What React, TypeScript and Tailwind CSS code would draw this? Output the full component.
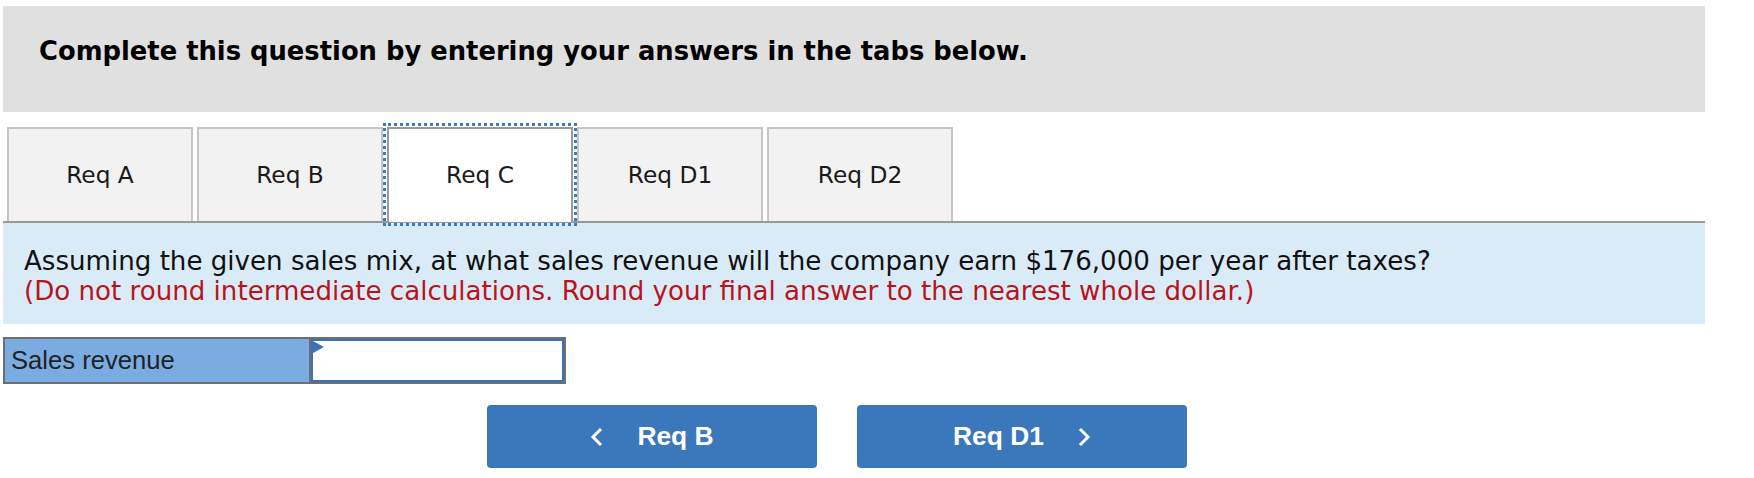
const tabs = ["Req A", "Req B", "Req C", "Req D1", "Req D2"];

function Chevron({ dir }: { dir: "left" | "right" }) {
  return (
    <svg width="14" height="20" viewBox="0 0 14 20" className="shrink-0">
      <polyline
        points={dir === "left" ? "11,2 3,10 11,18" : "3,2 11,10 3,18"}
        fill="none"
        stroke="white"
        strokeWidth="3"
      />
    </svg>
  );
}

export default function App() {
  return (
    <main className="min-h-screen bg-white pt-[6px] pl-[3px]">
      <div className="w-[1702px]">
        {/* HEADER */}
        <div className="h-[106px] bg-[#e0e0e0] pt-[30px] pl-[36px]">
          <h1 className="font-['DejaVu_Sans',sans-serif] text-[25.8px] font-bold leading-[30px] text-black">
            Complete this question by entering your answers in the tabs below.
          </h1>
        </div>

        {/* TABS */}
        <div className="mt-[15px] flex h-[96px] items-start gap-[4px] border-b-2 border-[#999999] pl-[4px]">
          {tabs.map((t) =>
            t === "Req C" ? (
              <div
                key={t}
                className="relative z-10 flex h-[95px] w-[186px] items-center justify-center border-x-2 border-t-2 border-[#9b9b9b] bg-white pb-[1px] font-['DejaVu_Sans',sans-serif] text-[23.3px] text-[#1a1a1a] outline-[3px] outline-offset-[1px] outline-dotted outline-[#3b7ac6]"
              >
                {t}
              </div>
            ) : (
              <div
                key={t}
                className="flex h-[94px] w-[186px] items-center justify-center border-x-2 border-t-2 border-[#c6c6c6] bg-[#f2f2f2] font-['DejaVu_Sans',sans-serif] text-[23.3px] text-[#1a1a1a]"
              >
                {t}
              </div>
            )
          )}
        </div>

        {/* QUESTION */}
        <div className="h-[101px] bg-[#daebf8] pt-[23px] pl-[21px] font-['DejaVu_Sans',sans-serif] text-[26.1px] leading-[30px]">
          <p className="text-[#111]">
            Assuming the given sales mix, at what sales revenue will the company earn $176,000 per year after taxes?
          </p>
          <p className="text-[#b8141c]">
            (Do not round intermediate calculations. Round your final answer to the nearest whole dollar.)
          </p>
        </div>

        {/* INPUT ROW */}
        <div className="mt-[13px] flex h-[47px] w-[563px] border-2 border-[#6e6e6e]">
          <div className="flex w-[306px] items-center border-r-2 border-[#6e6e6e] bg-[#7aace2] pl-[6px] font-['Liberation_Sans',sans-serif] text-[25.6px] text-[#222]">
            Sales revenue
          </div>
          <div className="relative flex-1 border-2 border-[#3a72b5] bg-white">
            <svg width="11" height="12" viewBox="0 0 11 12" className="absolute left-0 top-0">
              <polygon points="0,0 11,6 0,12" fill="#3a72b5" />
            </svg>
          </div>
        </div>

        {/* NAV BUTTONS */}
        <div className="mt-[21px] flex gap-[40px] pl-[484px]">
          <button className="flex h-[63px] w-[330px] items-center justify-center gap-[33px] rounded-[4px] bg-[#3b77bb] font-['Liberation_Sans',sans-serif] text-[26.4px] font-bold text-white">
            <Chevron dir="left" />
            <span>Req B</span>
          </button>
          <button className="flex h-[63px] w-[330px] items-center justify-center gap-[33px] rounded-[4px] bg-[#3b77bb] font-['Liberation_Sans',sans-serif] text-[26.4px] font-bold text-white">
            <span>Req D1</span>
            <Chevron dir="right" />
          </button>
        </div>
      </div>
    </main>
  );
}
